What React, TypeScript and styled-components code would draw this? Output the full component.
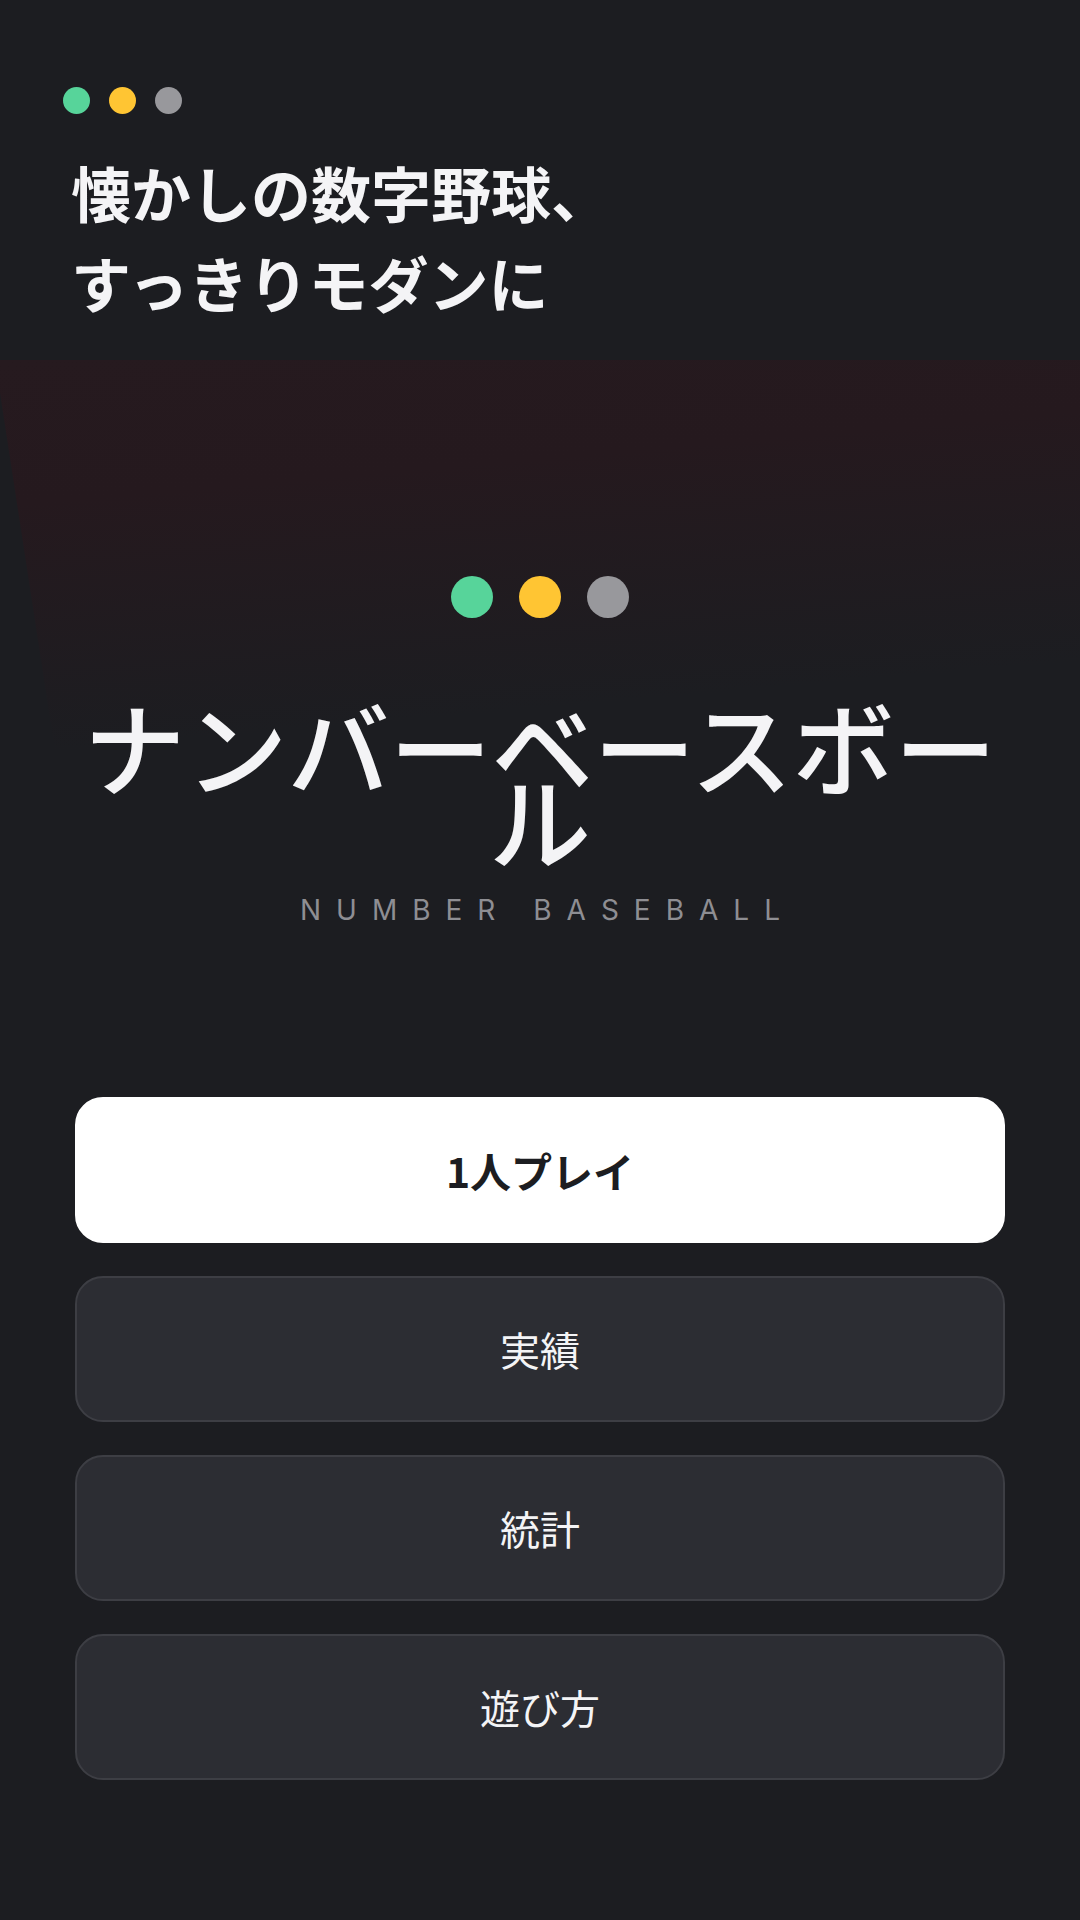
import React from 'react';
import styled, { createGlobalStyle } from 'styled-components';

const GlobalStyle = createGlobalStyle`
  html, body {
    margin: 0;
    padding: 0;
    background: #1c1d21;
  }
  * {
    box-sizing: border-box;
  }
`;

const JP = `"Noto Sans CJK JP", "Noto Sans", sans-serif`;

const Page = styled.div`
  min-height: 1920px;
  display: flex;
  flex-direction: column;
  background: #1c1d21;
  color: #f4f4f6;
  font-family: ${JP};
`;

const Header = styled.header`
  padding: 87px 63px 33px;
`;

const DotRow = styled.div<{ $gap: number; $center?: boolean }>`
  display: flex;
  gap: ${({ $gap }) => $gap}px;
  justify-content: ${({ $center }) => ($center ? 'center' : 'flex-start')};
`;

const Dot = styled.span<{ $color: string; $size: number }>`
  display: block;
  width: ${({ $size }) => $size}px;
  height: ${({ $size }) => $size}px;
  border-radius: 50%;
  background: ${({ $color }) => $color};
`;

const Tagline = styled.h1`
  margin: 33px 0 0;
  padding-left: 8px;
  font-family: ${JP};
  font-size: 60px;
  font-weight: 700;
  line-height: 90px;
  color: #f4f4f6;
`;

const Hero = styled.section`
  position: relative;
  padding: 216px 75px 0;
  text-align: center;
  overflow: hidden;

  /* reddish wash behind the logo, cut off by a slanted edge on the left */
  &::before {
    content: '';
    position: absolute;
    inset: 0;
    background: linear-gradient(175deg, #261a1f 0%, #25191e 22%, rgba(28, 29, 33, 0) 60%);
    clip-path: polygon(0 0, 100% 0, 100% 100%, 82px 100%, 0 5.8%);
    pointer-events: none;
  }

  & > * {
    position: relative;
  }
`;

const Title = styled.h2`
  margin: 90px -10px 0;
  font-family: ${JP};
  font-size: 102px;
  font-weight: 500;
  line-height: 74px;
  color: #f4f4f6;
`;

const Subtitle = styled.p`
  margin: 37px 0 0;
  font-family: Inter, "Liberation Sans", sans-serif;
  font-size: 28px;
  line-height: 34px;
  letter-spacing: 15px;
  text-indent: 15px;
  color: #8e8e93;
`;

const Menu = styled.nav`
  display: flex;
  flex-direction: column;
  gap: 33px;
  padding: 170px 75px 0;
`;

const MenuButton = styled.button<{ $primary?: boolean }>`
  height: 146px;
  border-radius: 28px;
  border: 2px solid ${({ $primary }) => ($primary ? '#ffffff' : '#3d3e44')};
  background: ${({ $primary }) => ($primary ? '#ffffff' : '#2c2d33')};
  color: ${({ $primary }) => ($primary ? '#1c1d21' : '#f4f4f6')};
  font-family: ${JP};
  font-size: ${({ $primary }) => ($primary ? 41 : 40)}px;
  font-weight: ${({ $primary }) => ($primary ? 600 : 400)};
  cursor: pointer;
`;

const dots = ['#57d49a', '#ffc533', '#98989c'];

const menuItems = ['実績', '統計', '遊び方'];

export default function App() {
  return (
    <Page>
      <GlobalStyle />
      <Header>
        <DotRow $gap={19}>
          {dots.map((c) => (
            <Dot key={c} $color={c} $size={27} />
          ))}
        </DotRow>
        <Tagline>
          懐かしの数字野球、
          <br />
          すっきりモダンに
        </Tagline>
      </Header>

      <Hero>
        <DotRow $gap={26} $center>
          {dots.map((c) => (
            <Dot key={c} $color={c} $size={42} />
          ))}
        </DotRow>
        <Title>ナンバーベースボール</Title>
        <Subtitle>NUMBER BASEBALL</Subtitle>
      </Hero>

      <Menu>
        <MenuButton $primary>1人プレイ</MenuButton>
        {menuItems.map((label) => (
          <MenuButton key={label}>{label}</MenuButton>
        ))}
      </Menu>
    </Page>
  );
}
